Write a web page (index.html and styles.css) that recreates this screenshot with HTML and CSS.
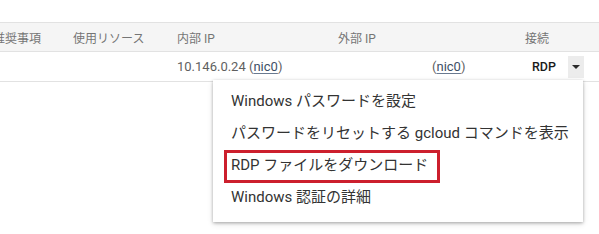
FILE: index.html
```html
<!DOCTYPE html>
<html lang="ja">
<head>
<meta charset="utf-8">
<link rel="stylesheet" href="styles.css">
</head>
<body>
<div class="page">
  <div class="table">
    <div class="row head">
      <div class="cell c1">推奨事項</div>
      <div class="cell c2">使用リソース</div>
      <div class="cell c3">内部 IP</div>
      <div class="cell c4">外部 IP</div>
      <div class="cell c5">接続</div>
    </div>
    <div class="row data">
      <div class="cell c1"></div>
      <div class="cell c2"></div>
      <div class="cell c3">10.146.0.24 (<span class="link">nic0</span>)</div>
      <div class="cell c4 ext">(<span class="link">nic0</span>)</div>
      <div class="cell c5 conn">
        <span class="rdp">RDP</span>
        <span class="drop"><span class="arrow"></span></span>
      </div>
    </div>
  </div>
  <div class="menu">
    <div class="item">Windows パスワードを設定</div>
    <div class="item">パスワードをリセットする gcloud コマンドを表示</div>
    <div class="item"><span class="hl">RDP ファイルをダウンロード</span></div>
    <div class="item">Windows 認証の詳細</div>
  </div>
</div>
</body>
</html>
```
FILE: styles.css
```css
html, body {
  margin: 0;
  padding: 0;
  background: #ffffff;
}
body {
  font-family: "Roboto", "Noto Sans CJK JP", sans-serif;
  width: 599px;
  height: 234px;
  overflow: hidden;
}
.page {
  position: relative;
  padding-top: 22px;
}
.table {
  margin-left: -7px;
}
.row {
  display: grid;
  grid-template-columns: 80px 104px 161px 187px 1fr;
  align-items: center;
}
.head {
  height: 28px;
  background: #f5f5f5;
  border-top: 1px solid #e2e2e2;
  border-bottom: 1px solid #e2e2e2;
  font-size: 12px;
  color: #757575;
}
.data {
  height: 29px;
  border-bottom: 1px solid #e2e2e2;
  font-size: 13px;
  color: #5f5f5f;
}
.cell {
  white-space: nowrap;
}
.link {
  color: #3d4f66;
  text-decoration: underline;
  text-decoration-color: #6a7a90;
  text-underline-offset: 2px;
}
.ext {
  padding-left: 94px;
}
.conn {
  display: flex;
  align-items: center;
  padding-left: 7px;
}
.rdp {
  color: #1a1a1a;
  font-weight: 500;
  font-size: 12.5px;
  width: 36px;
}
.drop {
  width: 16px;
  height: 22px;
  background: #ececec;
  display: flex;
  align-items: center;
  justify-content: center;
}
.arrow {
  width: 0;
  height: 0;
  border-left: 4px solid transparent;
  border-right: 4px solid transparent;
  border-top: 4px solid #2a2a2a;
}
.menu {
  position: absolute;
  left: 213px;
  top: 80px;
  width: 370px;
  padding: 5px 0 9px;
  background: #ffffff;
  box-shadow: 0 1px 3px rgba(0, 0, 0, 0.28), 0 2px 6px rgba(0, 0, 0, 0.12);
}
.item {
  height: 32px;
  line-height: 32px;
  padding-left: 18px;
  font-size: 15px;
  color: #333333;
  white-space: nowrap;
}
.hl {
  position: relative;
  display: inline-block;
  line-height: 32px;
}
.hl::after {
  content: "";
  position: absolute;
  left: -7px;
  right: -12px;
  top: 1px;
  bottom: -2px;
  border: 3px solid #cc1f2d;
}
```
